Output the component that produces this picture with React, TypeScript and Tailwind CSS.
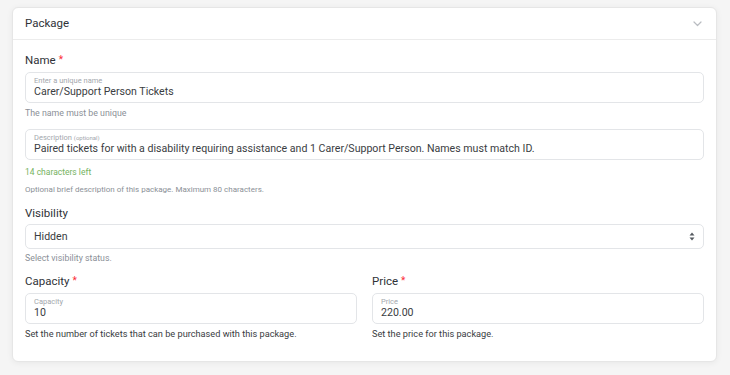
import React from 'react';

const font = { fontFamily: 'Roboto, "Noto Sans", sans-serif' };

const Required = () => <span className="text-red-500 ml-[3px] text-[10px] align-top">*</span>;

interface FloatInputProps {
  placeholder: React.ReactNode;
  value: string;
}

const FloatInput: React.FC<FloatInputProps> = ({ placeholder, value }) => (
  <div className="h-[31px] rounded-[5px] border border-[#e3e5e8] bg-white px-[8px] flex flex-col justify-center">
    <div className="text-[7.5px] leading-[9px] text-[#a3a7ad]">{placeholder}</div>
    <div className="text-[10.6px] leading-[14px] text-[#3a3d42] whitespace-nowrap">{value}</div>
  </div>
);

const App: React.FC = () => {
  return (
    <div className="min-h-[375px] w-[730px] bg-[#f5f5f5] pt-[7px] pl-[12px]" style={font}>
      <div className="w-[705px] h-[355px] rounded-[6px] border border-[#e6e6e6] bg-white shadow-[0_1px_6px_rgba(0,0,0,0.06)]">
        <div className="h-[32px] border-b border-[#ececec] flex items-center justify-between pl-[12px] pr-[14px]">
          <span className="text-[11.5px] text-[#2f3237]">Package</span>
          <svg width="9" height="6" viewBox="0 0 9 6" fill="none">
            <path d="M1 1l3.5 3.5L8 1" stroke="#b9bcc1" strokeWidth="1.2" strokeLinecap="round" strokeLinejoin="round" />
          </svg>
        </div>
        <div className="px-[12px] pt-[13px]">
          <div className="text-[11.5px] leading-[14px] text-[#2f3237]">Name<Required /></div>
          <div className="mt-[5px]">
            <FloatInput placeholder="Enter a unique name" value="Carer/Support Person Tickets" />
          </div>
          <div className="mt-[4px] text-[8.8px] leading-[12px] text-[#8b9097]">The name must be unique</div>

          <div className="mt-[10px]">
            <FloatInput
              placeholder={<>Description <span className="text-[6px]">(optional)</span></>}
              value="Paired tickets for with a disability requiring assistance and 1 Carer/Support Person. Names must match ID."
            />
          </div>
          <div className="mt-[6px] text-[8.5px] leading-[12px] text-[#76b35f]">14 characters left</div>
          <div className="mt-[6px] text-[8px] leading-[12px] text-[#8b9097]">Optional brief description of this package. Maximum 80 characters.</div>

          <div className="mt-[10px] text-[11.5px] leading-[14px] text-[#2f3237]">Visibility</div>
          <div className="mt-[4px] h-[25px] rounded-[5px] border border-[#e3e5e8] bg-white pl-[8px] pr-[8px] flex items-center justify-between">
            <span className="text-[10.6px] text-[#3a3d42]">Hidden</span>
            <svg width="6" height="9" viewBox="0 0 6 9">
              <path d="M3 0.5L5.5 3.5H0.5Z" fill="#555a60" />
              <path d="M3 8.5L0.5 5.5H5.5Z" fill="#555a60" />
            </svg>
          </div>
          <div className="mt-[3px] text-[8.8px] leading-[12px] text-[#8b9097]">Select visibility status.</div>

          <div className="mt-[10px] grid grid-cols-2 gap-[15px]">
            <div>
              <div className="text-[11.5px] leading-[14px] text-[#2f3237]">Capacity<Required /></div>
              <div className="mt-[5px]">
                <FloatInput placeholder="Capacity" value="10" />
              </div>
              <div className="mt-[4px] text-[9.2px] leading-[12px] text-[#3a3d42]">Set the number of tickets that can be purchased with this package.</div>
            </div>
            <div>
              <div className="text-[11.5px] leading-[14px] text-[#2f3237]">Price<Required /></div>
              <div className="mt-[5px]">
                <FloatInput placeholder="Price" value="220.00" />
              </div>
              <div className="mt-[4px] text-[9.2px] leading-[12px] text-[#3a3d42]">Set the price for this package.</div>
            </div>
          </div>
        </div>
      </div>
    </div>
  );
};

export default App;
